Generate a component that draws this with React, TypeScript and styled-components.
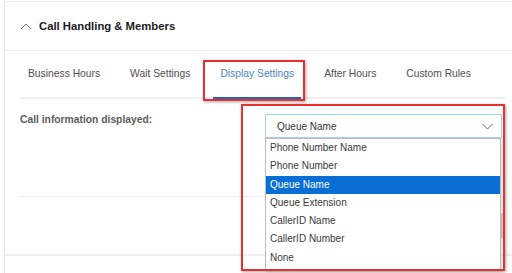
import React from 'react';
import styled, { createGlobalStyle } from 'styled-components';

const GlobalStyle = createGlobalStyle`
  html, body {
    margin: 0;
    padding: 0;
    background: #fff;
    overflow: hidden;
  }
  body {
    font-family: "Liberation Sans", Arial, sans-serif;
  }
`;

const Page = styled.div`
  width: 512px;
  height: 273px;
  padding-top: 1px;
  padding-left: 4px;
  box-sizing: border-box;
  overflow: hidden;
`;

const Card = styled.div`
  width: 512px;
  height: 272px;
  border-left: 1px solid #e6e6e6;
  border-top: 1px solid #ececec;
  box-sizing: border-box;
`;

const Header = styled.div`
  height: 48px;
  display: flex;
  align-items: center;
  gap: 7px;
  padding-left: 15px;
  border-bottom: 1px solid #ececec;
`;

const Title = styled.span`
  font-size: 11.3px;
  font-weight: bold;
  color: #1c1c1c;
`;

const Body = styled.div`
  padding: 0 11px 0 15px;
  border-bottom: 2px solid #efefef;
`;

const Tabs = styled.div`
  height: 48px;
  display: flex;
  gap: 16px;
  padding-left: 1px;
  border-bottom: 2px solid #efefef;
  box-sizing: border-box;
`;

const Tab = styled.div<{ $active?: boolean }>`
  position: relative;
  padding: 16px 7px 0;
  font-size: 10.3px;
  line-height: 14px;
  color: ${(p) => (p.$active ? '#4b86c6' : '#4f4f4f')};
  border-bottom: 2px solid ${(p) => (p.$active ? '#1f65b5' : 'transparent')};
  margin-bottom: -2px;
  white-space: nowrap;
`;

const Callout = styled.div`
  position: absolute;
  border: 2px solid #e8302f;
  box-shadow: 1px 1px 3px rgba(0, 0, 0, 0.35);
  pointer-events: none;
  z-index: 5;
`;

const TabCallout = styled(Callout)`
  left: -10px;
  right: -4px;
  top: 9px;
  bottom: -4px;
`;

const Row = styled.div<{ $height: number }>`
  height: ${(p) => p.$height}px;
  display: flex;
  align-items: flex-start;
  border-bottom: 1px solid #efefef;
  box-sizing: content-box;
`;

const RowLast = styled(Row)`
  border-bottom: none;
`;

const Label = styled.div`
  width: 245px;
  padding-top: 15px;
  font-size: 10.3px;
  font-weight: bold;
  color: #5b5b5b;
`;

const Field = styled.div<{ $top: number }>`
  position: relative;
  margin-top: ${(p) => p.$top}px;
`;

const Select = styled.div`
  width: 237px;
  height: 24px;
  box-sizing: border-box;
  border: 1px solid #a6d2f0;
  display: flex;
  align-items: center;
  justify-content: space-between;
  padding: 0 8px 0 11px;
  font-size: 10px;
  color: #333;
  background: #fff;
`;

const GhostSelect = styled.div`
  width: 238px;
  height: 25px;
  box-sizing: border-box;
  border: 1px solid #d6d6d6;
  border-right: 2px solid #cfcfcf;
`;

const List = styled.ul`
  position: absolute;
  top: 24px;
  left: 0;
  width: 236px;
  margin: 0;
  padding: 0 0 3px;
  list-style: none;
  background: #fff;
  border: 1px solid #bdbdbd;
  box-sizing: border-box;
  box-shadow: 1px 1px 2px rgba(0, 0, 0, 0.15);
  z-index: 4;
`;

const Option = styled.li<{ $selected?: boolean }>`
  height: 18.3px;
  line-height: 18.3px;
  padding-left: 4px;
  font-size: 10px;
  color: ${(p) => (p.$selected ? '#fff' : '#3a3a3a')};
  background: ${(p) => (p.$selected ? '#0a6fd4' : 'transparent')};
`;

const SelectCallout = styled(Callout)`
  left: -24px;
  top: -10px;
  width: 264px;
  height: 167px;
  box-sizing: border-box;
`;

const tabs = ['Business Hours', 'Wait Settings', 'Display Settings', 'After Hours', 'Custom Rules'];
const options = [
  'Phone Number Name',
  'Phone Number',
  'Queue Name',
  'Queue Extension',
  'CallerID Name',
  'CallerID Number',
  'None',
];

const App = () => {
  return (
    <>
      <GlobalStyle />
      <Page>
        <Card>
          <Header>
            <svg width="12" height="8" viewBox="0 0 12 8">
              <polyline points="1,7 6,2 11,7" fill="none" stroke="#777" strokeWidth="1" />
            </svg>
            <Title>Call Handling &amp; Members</Title>
          </Header>
          <Body>
            <Tabs>
              {tabs.map((t) => (
                <Tab key={t} $active={t === 'Display Settings'}>
                  {t}
                  {t === 'Display Settings' && <TabCallout />}
                </Tab>
              ))}
            </Tabs>
            <Row $height={97}>
              <Label>Call information displayed:</Label>
              <Field $top={15}>
                <Select>
                  <span>Queue Name</span>
                  <svg width="11" height="7" viewBox="0 0 11 7">
                    <polyline points="0.5,1 5.5,6 10.5,1" fill="none" stroke="#6a6a6a" strokeWidth="1" />
                  </svg>
                </Select>
                <List>
                  {options.map((o) => (
                    <Option key={o} $selected={o === 'Queue Name'}>
                      {o}
                    </Option>
                  ))}
                </List>
                <SelectCallout />
              </Field>
            </Row>
            <RowLast $height={57}>
              <Label />
              <Field $top={16}>
                <GhostSelect />
              </Field>
            </RowLast>
          </Body>
        </Card>
      </Page>
    </>
  );
};

export default App;
